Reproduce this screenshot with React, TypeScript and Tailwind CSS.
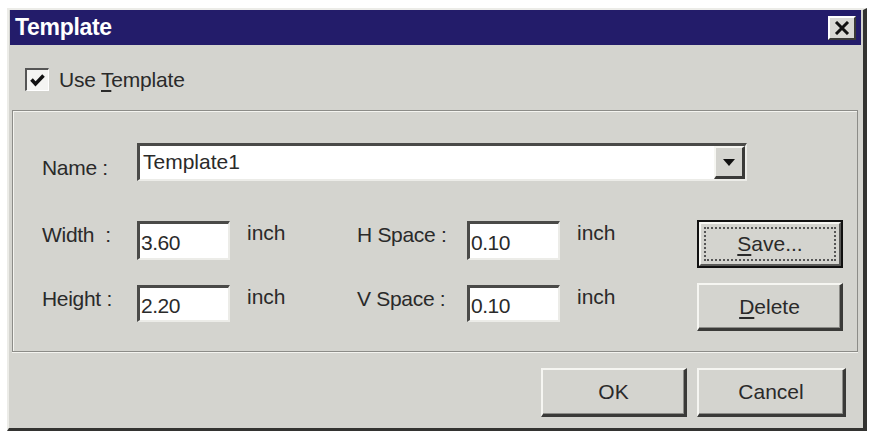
import React from "react";

const font = { fontFamily: '"Liberation Sans", Arial, sans-serif' };

function Sunken({ w, h, children }: { w: string; h: string; children?: React.ReactNode }) {
  return (
    <div
      className={`${w} ${h} bg-white border-t-[3px] border-l-[3px] border-b-2 border-r-2 border-t-[#4a4a48] border-l-[#4a4a48] border-b-[#ecece8] border-r-[#ecece8] flex items-center pl-[1px] pt-[3px] text-[21px] text-[#2a2a2a] tracking-[-0.5px]`}
    >
      {children}
    </div>
  );
}

function Btn({ w, h, children, def }: { w: string; h: string; children: React.ReactNode; def?: boolean }) {
  if (def) {
    return (
      <div className={`${w} ${h} border-2 border-[#111] flex`}>
        <div className="flex-1 border-t-2 border-l-2 border-t-[#f6f6f2] border-l-[#f6f6f2] border-b-2 border-r-2 border-b-[#5a5a58] border-r-[#5a5a58] flex p-[3px]">
          <div className="flex-1 border-2 border-dotted border-[#555] flex items-center justify-center text-[21px] text-[#2a2a2a]">
            {children}
          </div>
        </div>
      </div>
    );
  }
  return (
    <div
      className={`${w} ${h} border-t-2 border-l-2 border-t-[#f6f6f2] border-l-[#f6f6f2] border-b-[3px] border-r-[3px] border-b-[#3a3a38] border-r-[#3a3a38] shadow-[inset_-1px_-1px_0_#8c8c88] flex items-center justify-center text-[21px] text-[#2a2a2a]`}
    >
      {children}
    </div>
  );
}

export default function App() {
  return (
    <div className="w-[871px] h-[434px] bg-white overflow-hidden" style={font}>
      <div className="ml-[7px] mt-[8px] w-[860px] h-[423px] bg-[#d4d4cf] border-l-2 border-t-2 border-l-[#ecece8] border-t-[#ecece8] border-r-[4px] border-b-[3px] border-r-[#333331] border-b-[#333331] pl-[1px] pr-[2px] flex flex-col">
        {/* title bar */}
        <div className="h-[35px] bg-[#231c6a] flex items-center justify-between pl-[5px] pr-[5px]">
          <span className="text-white font-bold text-[23px] tracking-[-0.3px]">Template</span>
          <div className="w-[28px] h-[24px] bg-[#d8d8d4] border-t-2 border-l-2 border-t-white border-l-white border-b-2 border-r-2 border-b-[#3a3a38] border-r-[#3a3a38] flex items-center justify-center">
            <svg width="16" height="14" viewBox="0 0 16 14">
              <path d="M2 1 L14 13 M14 1 L2 13" stroke="#111" strokeWidth="3" />
            </svg>
          </div>
        </div>
        {/* top area */}
        <div className="h-[65px] flex items-center pl-[15px] pt-[4px]">
          <div className="w-[24px] h-[23px] bg-[#f4f4f2] border-t-2 border-l-2 border-t-[#555] border-l-[#555] border-b border-r border-b-white border-r-white flex items-center justify-center">
            <svg width="15" height="13" viewBox="0 0 15 13">
              <path d="M1.5 5.5 L5.5 10 L13.5 1.5" stroke="#111" strokeWidth="3.5" fill="none" />
            </svg>
          </div>
          <span className="ml-[10px] text-[21px] text-[#2a2a2a] tracking-[-0.2px]">
            Use <span className="underline underline-offset-[3px]">T</span>emplate
          </span>
        </div>
        {/* panel */}
        <div className="ml-[2px] mr-[3px] h-[242px] border border-[#8c8c88] shadow-[inset_1px_1px_0_#f4f4f0,0_1px_0_#f4f4f0] pl-[29px] pt-[32px] text-[21px] text-[#2a2a2a]">
          {/* name row */}
          <div className="flex items-start h-[38px]">
            <div className="w-[95px] h-[38px] flex items-center pt-[11px] tracking-[-0.3px]">Name :</div>
            <div className="w-[610px] h-[38px] bg-white border-t-[3px] border-l-[3px] border-b-2 border-r-2 border-t-[#4a4a48] border-l-[#4a4a48] border-b-[#ecece8] border-r-[#ecece8] flex">
              <div className="flex-1 flex items-center pl-[3px] pb-[2px]">Template1</div>
              <div className="w-[31px] h-full bg-[#d4d4cf] border-t-2 border-l-2 border-t-[#f6f6f2] border-l-[#f6f6f2] border-b-[3px] border-r-[3px] border-b-[#3a3a38] border-r-[#3a3a38] flex items-center justify-center">
                <svg width="12" height="7" viewBox="0 0 12 7">
                  <path d="M0 0 L12 0 L6 7 Z" fill="#111" />
                </svg>
              </div>
            </div>
          </div>
          {/* width row */}
          <div className="flex items-start h-[39px] mt-[40px]">
            <div className="w-[95px] h-[28px] flex items-center tracking-[-0.3px]">Width&nbsp; :</div>
            <Sunken w="w-[93px]" h="h-[39px]">3.60</Sunken>
            <div className="w-[127px] h-[24px] pl-[17px] flex items-center">inch</div>
            <div className="w-[110px] h-[28px] flex items-center tracking-[-0.3px]">H Space :</div>
            <Sunken w="w-[93px]" h="h-[39px]">0.10</Sunken>
            <div className="w-[137px] h-[24px] pl-[17px] flex items-center">inch</div>
            <div className="-mt-[1px]">
              <Btn w="w-[146px]" h="h-[48px]" def>
                <span>
                  <span className="underline underline-offset-[3px]">S</span>ave...
                </span>
              </Btn>
            </div>
          </div>
          {/* height row */}
          <div className="flex items-start h-[37px] mt-[25px]">
            <div className="w-[95px] h-[28px] flex items-center tracking-[-0.3px]">Height :</div>
            <Sunken w="w-[93px]" h="h-[37px]">2.20</Sunken>
            <div className="w-[127px] h-[24px] pl-[17px] flex items-center">inch</div>
            <div className="w-[110px] h-[28px] flex items-center tracking-[-0.3px]">V Space :</div>
            <Sunken w="w-[93px]" h="h-[37px]">0.10</Sunken>
            <div className="w-[137px] h-[24px] pl-[17px] flex items-center">inch</div>
            <div className="-mt-[2px]">
              <Btn w="w-[146px]" h="h-[48px]">
                <span>
                  <span className="underline underline-offset-[3px]">D</span>elete
                </span>
              </Btn>
            </div>
          </div>
        </div>
        {/* bottom */}
        <div className="flex-1 flex items-start justify-end pr-[15px] pt-[16px] gap-[10px]">
          <Btn w="w-[146px]" h="h-[49px]">OK</Btn>
          <Btn w="w-[149px]" h="h-[49px]">Cancel</Btn>
        </div>
      </div>
    </div>
  );
}
